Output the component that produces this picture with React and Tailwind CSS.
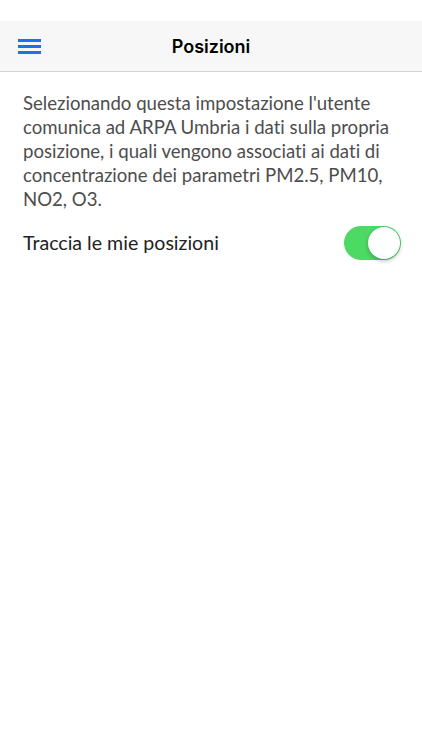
export default function App() {
  return (
    <div className="w-[422px] h-[750px] bg-white flex flex-col">
      <div className="h-[21px] bg-white" />
      <div className="h-[51px] bg-[#f7f7f7] border-b border-[#d3d3d3] flex items-center relative">
        <div className="pl-[18px] flex flex-col gap-[3px]">
          <div className="w-[23px] h-[3px] bg-[#1a73e8]" />
          <div className="w-[23px] h-[3px] bg-[#1a73e8]" />
          <div className="w-[23px] h-[3px] bg-[#1a73e8]" />
        </div>
        <div className="absolute inset-0 flex items-center justify-center text-[18px] font-semibold text-black font-['Inter',sans-serif]">
          Posizioni
        </div>
      </div>
      <div className="px-[23px] pt-[19px] text-[18.6px] leading-[24px] text-[#4d4d4d] font-['Lato',sans-serif] [font-variant-ligatures:none]">
        Selezionando questa impostazione l'utente comunica ad ARPA Umbria i dati sulla propria posizione, i quali vengono associati ai dati di concentrazione dei parametri PM2.5, PM10, NO2, O3.
      </div>
      <div className="pl-[23px] pr-[21px] pt-[15px] flex items-center justify-between">
        <span className="text-[19.6px] text-[#222] font-['Lato',sans-serif]">Traccia le mie posizioni</span>
        <div className="w-[57px] h-[34px] rounded-full bg-[#4cd964] flex items-center justify-end pr-[1px]">
          <div className="w-[32px] h-[32px] rounded-full bg-white shadow-[0_2px_4px_rgba(0,0,0,0.25)]" />
        </div>
      </div>
    </div>
  );
}
